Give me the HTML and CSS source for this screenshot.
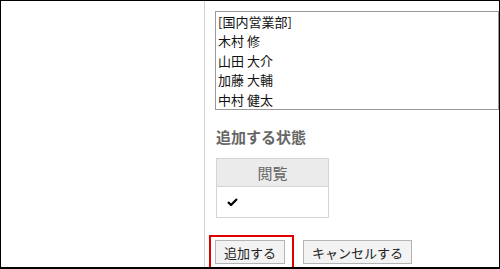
FILE: index.html
```html
<!DOCTYPE html>
<html lang="ja">
<head>
    <meta charset="UTF-8">
    <title>追加する状態</title>
    <link rel="stylesheet" href="styles.css">
</head>
<body>
    <div class="frame">
        <div class="side"></div>

        <div class="content">
            <div class="user-list">
                <div class="user-item">[国内営業部]</div>
                <div class="user-item">木村 修</div>
                <div class="user-item">山田 大介</div>
                <div class="user-item">加藤 大輔</div>
                <div class="user-item">中村 健太</div>
            </div>

            <h2 class="section-title">追加する状態</h2>

            <table class="perm-table">
                <tr>
                    <th>閲覧</th>
                </tr>
                <tr>
                    <td>
                        <svg class="check" width="11" height="8" viewBox="0 0 11 8">
                            <path d="M1 4 L4 7 L10 1" fill="none" stroke="#000" stroke-width="2.2"/>
                        </svg>
                    </td>
                </tr>
            </table>

            <div class="actions">
                <span class="highlight">
                    <button class="btn">追加する</button>
                </span>
                <button class="btn">キャンセルする</button>
            </div>
        </div>
    </div>
</body>
</html>
```

FILE: styles.css
```css
body {
    margin: 0;
    font-family: "Noto Sans CJK JP", "Liberation Sans", sans-serif;
    color: #222;
    background-color: white;
}

.frame {
    display: flex;
    width: 500px;
    height: 269px;
    box-sizing: border-box;
    border: 1px solid #000;
    border-bottom-width: 2px;
    overflow: hidden;
}

.side {
    width: 203px;
    flex-shrink: 0;
}

.content {
    flex: 1;
    border-left: 1px solid #d0d0d0;
    padding: 10px 0 0 10px;
}

.user-list {
    border: 1px solid #999;
    padding-left: 2px;
}

.user-item {
    font-size: 13px;
    line-height: 19.4px;
    color: #111;
}

.section-title {
    margin: 17px 0 11px 1px;
    font-size: 15px;
    line-height: 20px;
    font-weight: bold;
    color: #666;
}

.perm-table {
    margin-left: 1px;
    width: 113px;
    border-collapse: collapse;
}

.perm-table th,
.perm-table td {
    border: 1px solid #d4d4d4;
    padding: 0;
}

.perm-table th {
    height: 27px;
    background-color: #ebebeb;
    font-size: 15px;
    font-weight: normal;
    color: #666;
}

.perm-table td {
    height: 30px;
    padding-left: 10px;
    vertical-align: middle;
}

.check {
    display: block;
}

.actions {
    margin-top: 17px;
    display: flex;
    align-items: flex-start;
    gap: 9px;
}

.highlight {
    margin-left: -6px;
    border: 2px solid #e00000;
    padding: 3px 7px 3px 4px;
    display: flex;
}

.btn {
    font-family: "Noto Sans CJK JP", "Liberation Sans", sans-serif;
    font-size: 13px;
    height: 24px;
    padding: 0 8px;
    background-color: #f3f3f3;
    border: 1px solid #b4b4b4;
    border-radius: 0;
    color: #222;
}

.actions > .btn {
    margin-top: 5px;
}
```
